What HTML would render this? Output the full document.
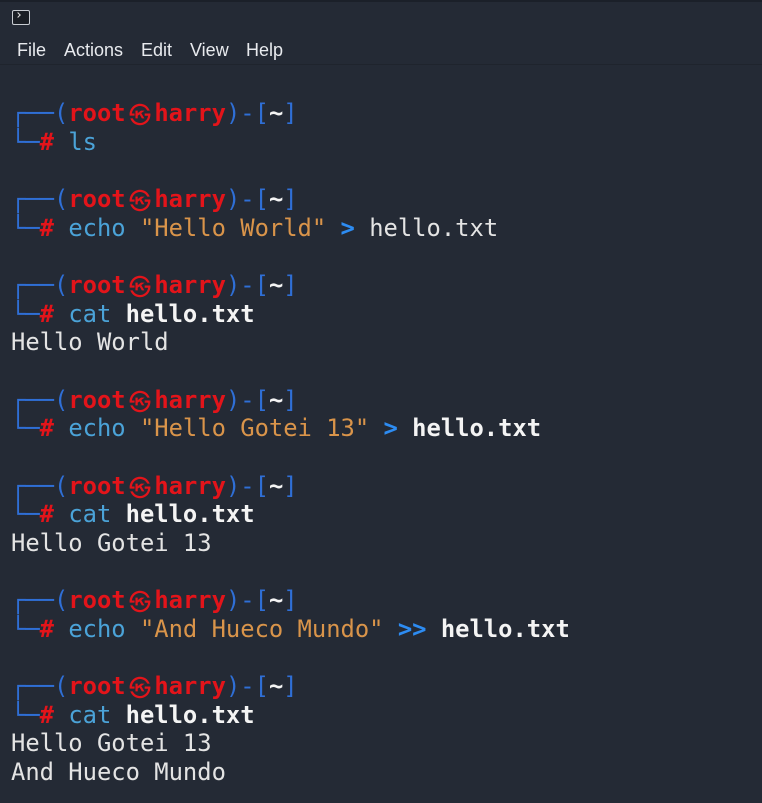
<!DOCTYPE html>
<html><head><meta charset="utf-8"><style>
html,body{margin:0;padding:0}
body{width:762px;height:803px;background:#242a35;overflow:hidden;position:relative;font-family:"Liberation Sans",sans-serif}
.top{position:absolute;left:0;top:0;width:762px;height:2px;background:#1b2029}
.icon{position:absolute;left:12px;top:10px;width:18px;height:15px;border:1.5px solid #c8ccd2;border-radius:2px;box-sizing:border-box;background:#1b1f26}
.icon:after{content:"";position:absolute;left:3px;top:2px;width:3px;height:3px;border-right:1px solid #ddd;border-bottom:1px solid #ddd;transform:rotate(-45deg)}
.menu span{position:absolute;top:40px;color:#e8eaee;font-size:18px}
.sep{position:absolute;left:0;top:64px;width:762px;height:1px;background:#1f242d}
.term{position:absolute;left:11px;top:99px;font-family:"DejaVu Sans Mono","Liberation Mono",monospace;font-size:23.8px;color:#e4e4e4}
.term div{height:28.67px;line-height:28.67px;white-space:pre}
.b{color:#2f6fd6}.r{color:#e3141a;font-weight:bold}.c{color:#4ba3d8}.s{color:#d9944a}.g{color:#2d8cf2;font-weight:bold}.w{color:#f4f4f4;font-weight:bold}
.k{display:inline-block;width:28.7px;height:20px;line-height:20px;text-align:center;font-size:22px;vertical-align:-2px;font-weight:bold;color:#e3141a;font-family:"Noto Sans CJK JP",sans-serif}
</style></head><body>
<div class="top"></div>
<div class="icon"></div>
<div class="menu"><span style="left:17px">File</span><span style="left:64px">Actions</span><span style="left:141px">Edit</span><span style="left:190px">View</span><span style="left:246px">Help</span></div>
<div class="sep"></div>
<div class="term"><div><span class="b">┌──(</span><span class="r">root<span class="k">㉿</span>harry</span><span class="b">)-[</span><span class="w">~</span><span class="b">]</span></div><div><span class="b">└─</span><span class="r">#</span> <span class="c">ls</span></div><div></div><div><span class="b">┌──(</span><span class="r">root<span class="k">㉿</span>harry</span><span class="b">)-[</span><span class="w">~</span><span class="b">]</span></div><div><span class="b">└─</span><span class="r">#</span> <span class="c">echo</span> <span class="s">"Hello World"</span> <span class="g">&gt;</span> hello.txt</div><div></div><div><span class="b">┌──(</span><span class="r">root<span class="k">㉿</span>harry</span><span class="b">)-[</span><span class="w">~</span><span class="b">]</span></div><div><span class="b">└─</span><span class="r">#</span> <span class="c">cat</span> <span class="w">hello.txt</span></div><div>Hello World</div><div></div><div><span class="b">┌──(</span><span class="r">root<span class="k">㉿</span>harry</span><span class="b">)-[</span><span class="w">~</span><span class="b">]</span></div><div><span class="b">└─</span><span class="r">#</span> <span class="c">echo</span> <span class="s">"Hello Gotei 13"</span> <span class="g">&gt;</span> <span class="w">hello.txt</span></div><div></div><div><span class="b">┌──(</span><span class="r">root<span class="k">㉿</span>harry</span><span class="b">)-[</span><span class="w">~</span><span class="b">]</span></div><div><span class="b">└─</span><span class="r">#</span> <span class="c">cat</span> <span class="w">hello.txt</span></div><div>Hello Gotei 13</div><div></div><div><span class="b">┌──(</span><span class="r">root<span class="k">㉿</span>harry</span><span class="b">)-[</span><span class="w">~</span><span class="b">]</span></div><div><span class="b">└─</span><span class="r">#</span> <span class="c">echo</span> <span class="s">"And Hueco Mundo"</span> <span class="g">&gt;&gt;</span> <span class="w">hello.txt</span></div><div></div><div><span class="b">┌──(</span><span class="r">root<span class="k">㉿</span>harry</span><span class="b">)-[</span><span class="w">~</span><span class="b">]</span></div><div><span class="b">└─</span><span class="r">#</span> <span class="c">cat</span> <span class="w">hello.txt</span></div><div>Hello Gotei 13</div><div>And Hueco Mundo</div></div>
</body></html>
